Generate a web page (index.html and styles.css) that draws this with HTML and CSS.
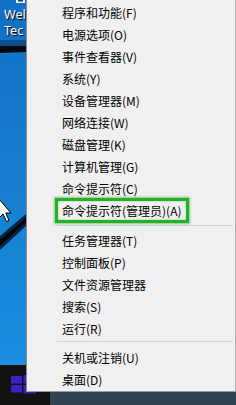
FILE: index.html
```html
<!DOCTYPE html>
<html lang="zh-CN">
<head>
<meta charset="utf-8">
<title>Win+X 菜单</title>
<link rel="stylesheet" href="styles.css">
</head>
<body>
<div class="screen">
  <div class="desktop">
    <svg class="wallpaper" width="236" height="365" viewBox="0 0 236 365">
      <defs>
        <linearGradient id="bg" x1="0" y1="0" x2="0" y2="1">
          <stop offset="0" stop-color="#116fc4"/>
          <stop offset="0.5" stop-color="#177fd2"/>
          <stop offset="1" stop-color="#1d8fe0"/>
        </linearGradient>
      </defs>
      <rect x="0" y="0" width="236" height="365" fill="url(#bg)"/>
      <rect x="0" y="40" width="26" height="6" fill="#0c4f8e"/>
      <polygon points="0,46 26,46 26,52 0,53" fill="#05080e"/>
      <polygon points="0,236 26,214 26,226 0,250" fill="#0a2440"/>
      <polygon points="0,240 26,218 26,222 0,246" fill="#03070c"/>
      <rect x="16" y="0" width="9" height="3" fill="#e8eef5"/>
      <rect x="18" y="0" width="5" height="1.5" fill="#1a3a6a"/>
      <path d="M-1,199 L-1,218 L3,214 L6.5,221.5 L9,220.5 L5.8,213 L11,213 Z" fill="#ffffff" stroke="#000000" stroke-width="1" stroke-linejoin="miter"/>
    </svg>
    <div class="icons">
      <span class="icon-label">Wel</span>
      <span class="icon-label">Tec</span>
    </div>
  </div>
  <div class="taskbar">
    <div class="start">
      <svg width="26" height="19" viewBox="0 0 26 19">
        <rect x="0" y="1" width="11" height="7.5" fill="#3b20c4"/>
        <rect x="12.5" y="0" width="12.5" height="8.5" fill="#3b20c4"/>
        <rect x="0" y="10" width="11" height="7.5" fill="#3b20c4"/>
        <rect x="12.5" y="10" width="12.5" height="8.5" fill="#3b20c4"/>
      </svg>
    </div>
    <div class="tasks"></div>
  </div>

  <nav class="menu">
    <div class="item">程序和功能(F)</div>
    <div class="item">电源选项(O)</div>
    <div class="item">事件查看器(V)</div>
    <div class="item">系统(Y)</div>
    <div class="item">设备管理器(M)</div>
    <div class="item">网络连接(W)</div>
    <div class="item">磁盘管理(K)</div>
    <div class="item">计算机管理(G)</div>
    <div class="item">命令提示符(C)</div>
    <div class="item"><span class="box">命令提示符(管理员)(A)</span></div>
    <div class="sep sep-a"></div>
    <div class="item">任务管理器(T)</div>
    <div class="item">控制面板(P)</div>
    <div class="item">文件资源管理器</div>
    <div class="item">搜索(S)</div>
    <div class="item">运行(R)</div>
    <div class="sep sep-b"></div>
    <div class="item">关机或注销(U)</div>
    <div class="item">桌面(D)</div>
  </nav>
</div>
</body>
</html>
```

FILE: styles.css
```css
html, body {
  margin: 0;
  padding: 0;
  background: #1479cf;
}

.screen {
  position: relative;
  width: 236px;
  height: 405px;
  overflow: hidden;
  display: grid;
  grid-template-rows: 365px 40px;
}

.desktop {
  display: grid;
  overflow: hidden;
}

.wallpaper {
  grid-area: 1 / 1;
  display: block;
}

.icons {
  grid-area: 1 / 1;
  display: flex;
  flex-direction: column;
  align-self: start;
  justify-self: start;
  padding: 7px 0 0 4px;
  font-family: "Noto Sans", "Open Sans", sans-serif;
  font-size: 12.5px;
  line-height: 16px;
  color: #ffffff;
  text-shadow: 1px 1px 1px #000000;
  white-space: nowrap;
}

.taskbar {
  display: grid;
  grid-template-columns: 50px 1fr;
  background: #121212;
}

.start {
  display: flex;
  align-items: flex-start;
  padding: 10px 0 0 11px;
}

.start svg {
  display: block;
}

.tasks {
  background: linear-gradient(#121212 0, #121212 27px, #2f4352 27px, #2f4352 100%);
}

.menu {
  position: absolute;
  left: 26px;
  top: 0;
  box-sizing: border-box;
  width: 210px;
  height: 392px;
  padding-top: 1px;
  background: #f0f0f0;
  border-left: 1px solid #8c8c8c;
  border-right: 1px solid #b4b4b4;
  border-bottom: 1px solid #9a9a9a;
  font-family: "Noto Sans CJK SC", "Noto Sans", sans-serif;
  font-size: 12px;
  color: #000000;
}

.item {
  display: flex;
  align-items: center;
  height: 22px;
  padding-left: 35px;
  white-space: nowrap;
}

.box {
  display: flex;
  align-items: center;
  box-sizing: border-box;
  height: 25px;
  margin: -1px 0 -2px -7px;
  padding: 0 4px;
  border: 3px solid #21b421;
  box-shadow: 0 0 2px 1px rgba(20, 140, 20, 0.45), inset 0 0 2px rgba(20, 140, 20, 0.45);
}

.sep {
  height: 1px;
  background: #d4d4d4;
  margin-left: 30px;
  margin-right: 2px;
}

.sep-a {
  margin-top: 4px;
  margin-bottom: 3px;
}

.sep-b {
  margin-top: 2px;
  margin-bottom: 4px;
}
```
